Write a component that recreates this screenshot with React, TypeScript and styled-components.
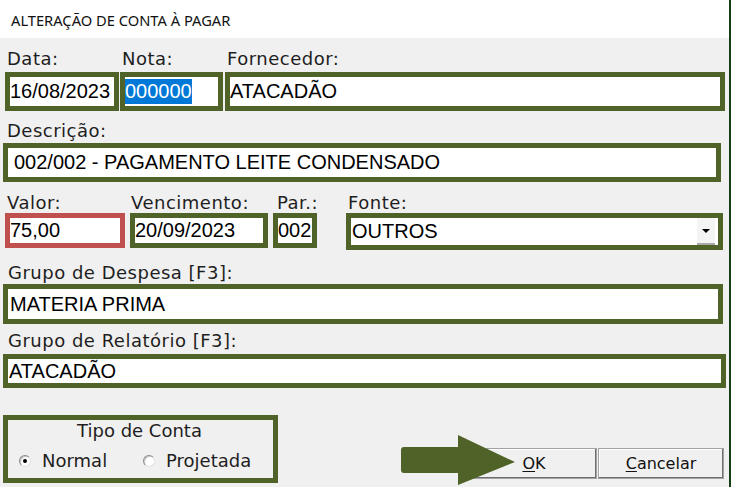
import React from "react";
import styled, { createGlobalStyle } from "styled-components";

const GREEN = "#4f6228";
const RED = "#c0504d";

const GlobalStyle = createGlobalStyle`
  html, body { margin: 0; padding: 0; background: #f0f0f0; }
  * { box-sizing: border-box; }
`;

const Window = styled.div`
  position: relative;
  width: 731px;
  height: 487px;
  display: flex;
  flex-direction: column;
  border-right: 2px solid #173d14;
  overflow: hidden;
  background: #f0f0f0;
`;

const TitleBar = styled.div`
  height: 38px;
  flex-shrink: 0;
  background: #fff;
  padding: 10px 0 0 11px;
  font-family: "Noto Sans", "Open Sans", sans-serif;
  font-size: 14.7px;
  line-height: 20px;
  color: #111;
`;

const Body = styled.div`
  flex: 1;
  display: flex;
  flex-direction: column;
  padding-top: 10px;
`;

const Row = styled.div<{ $mt: number; $pl: number }>`
  display: flex;
  margin-top: ${(p) => p.$mt}px;
  padding-left: ${(p) => p.$pl}px;
`;

const Field = styled.div<{ $w: number; $ml?: number }>`
  width: ${(p) => p.$w}px;
  margin-left: ${(p) => p.$ml ?? 0}px;
  flex-shrink: 0;
  display: flex;
  flex-direction: column;
`;

const Label = styled.div<{ $h: number; $indent: number }>`
  height: ${(p) => p.$h}px;
  line-height: 22px;
  padding-left: ${(p) => p.$indent}px;
  font-family: "DejaVu Sans", Verdana, sans-serif;
  font-size: 18px;
  letter-spacing: 0.5px;
  color: #1e1e1e;
  white-space: nowrap;
`;

const Box = styled.div<{ $h: number; $color?: string; $pad?: number }>`
  height: ${(p) => p.$h}px;
  border: 5px solid ${(p) => p.$color ?? GREEN};
  background: #fff;
  padding-left: ${(p) => p.$pad ?? 0}px;
  display: flex;
  align-items: center;
  font-family: "Liberation Sans", Arial, sans-serif;
  font-size: 20px;
  color: #000;
  white-space: nowrap;
  overflow: hidden;
`;

const Value = styled.span`
  flex: 1;
  line-height: 24px;
  margin-top: -1px;
`;

const Selected = styled.span`
  display: inline-block;
  background: #0078d7;
  color: #fff;
  line-height: 25px;
`;

const DropButton = styled.div`
  width: 18px;
  height: 27px;
  margin-right: 3px;
  flex-shrink: 0;
  background: #f4f4f4;
  border-bottom: 2px solid #a8a8a8;
  display: flex;
  align-items: center;
  justify-content: center;
`;

const Caret = styled.div`
  width: 0;
  height: 0;
  border-left: 4px solid transparent;
  border-right: 4px solid transparent;
  border-top: 4px solid #000;
`;

const BottomRow = styled.div`
  display: flex;
  justify-content: space-between;
  align-items: flex-start;
  margin-top: 27px;
  padding-left: 3px;
  padding-right: 5px;
`;

const GroupBox = styled.div`
  width: 275px;
  height: 68px;
  border: 5px solid ${GREEN};
  padding-top: 0;
  display: flex;
  flex-direction: column;
  font-family: "DejaVu Sans", Verdana, sans-serif;
  font-size: 18px;
  color: #1e1e1e;
`;

const GroupTitle = styled.div`
  line-height: 21px;
  text-align: center;
  padding-right: 2px;
`;

const RadioRow = styled.div`
  display: flex;
  align-items: center;
  margin-top: 9px;
  padding-left: 11px;
  line-height: 21px;
`;

const RadioItem = styled.div<{ $w: number }>`
  width: ${(p) => p.$w}px;
  display: flex;
  align-items: center;
  gap: 11px;
`;

const RadioCircle = styled.div<{ $checked?: boolean }>`
  width: 12px;
  height: 12px;
  border-radius: 50%;
  background: #fff;
  border: 1px solid;
  border-color: #8a8a8a #e2e2e2 #e2e2e2 #8a8a8a;
  box-shadow: inset 1px 1px 0 #c8c8c8;
  display: flex;
  align-items: center;
  justify-content: center;
  flex-shrink: 0;
  &::after {
    content: "";
    width: 4px;
    height: 4px;
    border-radius: 50%;
    background: ${(p) => (p.$checked ? "#000" : "transparent")};
  }
`;

const Buttons = styled.div`
  display: flex;
  gap: 1px;
  margin-top: 33px;
`;

const Button = styled.div`
  width: 126px;
  height: 31px;
  display: flex;
  align-items: center;
  justify-content: center;
  background: #f0f0f0;
  border: 1px solid #a3a3a3;
  box-shadow: inset -1px -1px 0 #6f6f6f, inset 1px 1px 0 #fff;
  font-family: "DejaVu Sans", Verdana, sans-serif;
  font-size: 16px;
  color: #111;
`;

const Accel = styled.span`
  text-decoration: underline;
  text-underline-offset: 2px;
`;

const Arrow = styled.svg`
  position: absolute;
  left: 401px;
  top: 435px;
  width: 115px;
  height: 51px;
  z-index: 2;
`;

export default function App() {
  return (
    <>
      <GlobalStyle />
      <Window>
        <TitleBar>ALTERAÇÃO DE CONTA À PAGAR</TitleBar>
        <Body>
          <Row $mt={0} $pl={5}>
            <Field $w={114}>
              <Label $h={24} $indent={2}>Data:</Label>
              <Box $h={39}>
                <Value>16/08/2023</Value>
              </Box>
            </Field>
            <Field $w={103} $ml={1}>
              <Label $h={24} $indent={2}>Nota:</Label>
              <Box $h={39}>
                <Value>
                  <Selected>000000</Selected>
                </Value>
              </Box>
            </Field>
            <Field $w={500} $ml={2}>
              <Label $h={24} $indent={2}>Fornecedor:</Label>
              <Box $h={39}>
                <Value>ATACADÃO</Value>
              </Box>
            </Field>
          </Row>

          <Row $mt={9} $pl={3}>
            <Field $w={718}>
              <Label $h={23} $indent={4}>Descrição:</Label>
              <Box $h={39} $pad={6}>
                <Value>002/002 - PAGAMENTO LEITE CONDENSADO</Value>
              </Box>
            </Field>
          </Row>

          <Row $mt={10} $pl={5}>
            <Field $w={120}>
              <Label $h={21} $indent={2}>Valor:</Label>
              <Box $h={35} $color={RED}>
                <Value>75,00</Value>
              </Box>
            </Field>
            <Field $w={138} $ml={5}>
              <Label $h={21} $indent={1}>Vencimento:</Label>
              <Box $h={35}>
                <Value>20/09/2023</Value>
              </Box>
            </Field>
            <Field $w={44} $ml={5}>
              <Label $h={21} $indent={4}>Par.:</Label>
              <Box $h={35}>
                <Value>002</Value>
              </Box>
            </Field>
            <Field $w={377} $ml={29}>
              <Label $h={21} $indent={2}>Fonte:</Label>
              <Box $h={37} $pad={1}>
                <Value>OUTROS</Value>
                <DropButton>
                  <Caret />
                </DropButton>
              </Box>
            </Field>
          </Row>

          <Row $mt={12} $pl={3}>
            <Field $w={720}>
              <Label $h={22} $indent={5}>Grupo de Despesa [F3]:</Label>
              <Box $h={40} $pad={2}>
                <Value>MATERIA PRIMA</Value>
              </Box>
            </Field>
          </Row>

          <Row $mt={6} $pl={3}>
            <Field $w={723}>
              <Label $h={24} $indent={5}>Grupo de Relatório [F3]:</Label>
              <Box $h={34} $pad={1}>
                <Value>ATACADÃO</Value>
              </Box>
            </Field>
          </Row>

          <BottomRow>
            <GroupBox>
              <GroupTitle>Tipo de Conta</GroupTitle>
              <RadioRow>
                <RadioItem $w={124}>
                  <RadioCircle $checked />
                  <span>Normal</span>
                </RadioItem>
                <RadioItem $w={130}>
                  <RadioCircle />
                  <span>Projetada</span>
                </RadioItem>
              </RadioRow>
            </GroupBox>
            <Buttons>
              <Button>
                <span>
                  <Accel>O</Accel>K
                </span>
              </Button>
              <Button>
                <span>
                  <Accel>C</Accel>ancelar
                </span>
              </Button>
            </Buttons>
          </BottomRow>
        </Body>
        <Arrow viewBox="0 0 115 51">
          <path
            d="M3 12 L57 12 L57 0 L114 27 L57 50 L57 38 L3 38 Q0 38 0 35 L0 15 Q0 12 3 12 Z"
            fill={GREEN}
          />
        </Arrow>
      </Window>
    </>
  );
}
